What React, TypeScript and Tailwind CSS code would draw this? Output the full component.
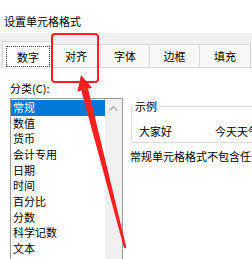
const categories = [
  "常规",
  "数值",
  "货币",
  "会计专用",
  "日期",
  "时间",
  "百分比",
  "分数",
  "科学记数",
  "文本",
];

const tabs = [
  { label: "对齐", width: "w-[49px]" },
  { label: "字体", width: "w-[49px]" },
  { label: "边框", width: "w-[50px]" },
  { label: "填充", width: "w-[51px]" },
];

export default function App() {
  return (
    <div className="relative h-[259px] w-[252px] overflow-hidden bg-white font-['Noto_Sans_CJK_SC',sans-serif] text-[11px] text-black">
      {/* Title bar */}
      <div className="h-[33px] px-[4px] pt-[14px] leading-[14px]">设置单元格格式</div>

      {/* Tab strip */}
      <div className="flex h-[35px] items-end bg-[#f0f0f0] pl-[2px]">
        <div className="h-[27px] w-[50px] shrink-0 border-x border-t border-[#d9d9d9] bg-white pl-[3px] pt-[4px]">
          <div className="flex h-[21px] w-[44px] items-center justify-center border border-dotted border-[#555] leading-[14px]">
            数字
          </div>
        </div>
        {tabs.map((tab) => (
          <div
            key={tab.label}
            className={`${tab.width} flex h-[24px] shrink-0 items-center justify-center border-y border-r border-[#d9d9d9] bg-[#f8f8f8] leading-[14px]`}
          >
            {tab.label}
          </div>
        ))}
        <div className="h-[24px] flex-1 border-b border-[#d9d9d9]" />
      </div>

      {/* Tab page */}
      <div className="flex pl-[10px] pt-[13px]">
        {/* Category list */}
        <div className="w-[113px] shrink-0">
          <div className="h-[14px] leading-[14px]">分类(C):</div>
          <div className="mt-[3px] flex h-[200px] border border-[#9a9a9a]">
            <ul className="w-[94px] pt-[1px]">
              {categories.map((item, i) => (
                <li
                  key={item}
                  className={
                    i === 0
                      ? "h-[15.67px] bg-[#0078d7] pl-[2px] leading-[15.67px] text-white"
                      : "h-[15.67px] pl-[2px] leading-[15.67px]"
                  }
                >
                  {item}
                </li>
              ))}
            </ul>
            <div className="w-[17px] bg-[#f0f0f0]">
              <div className="flex h-[17px] items-center justify-center pt-[1px]">
                <svg width="9" height="5" viewBox="0 0 9 5">
                  <path d="M0.5 4.5 L4.5 0.8 L8.5 4.5" fill="none" stroke="#a6a6a6" strokeWidth="1.2" />
                </svg>
              </div>
            </div>
          </div>
        </div>

        {/* Sample + description */}
        <div className="ml-[8px] min-w-0 whitespace-nowrap">
          <fieldset className="mt-[18px] w-[200px] border border-[#dcdcdc] pb-[4px]">
            <legend className="ml-[1px] px-[2px] leading-[14px]">示例</legend>
            <div className="mt-[11px] flex pl-[7px] leading-[14px]">
              <span className="w-[76px]">大家好</span>
              <span>今天天气很好</span>
            </div>
          </fieldset>
          <p className="-ml-[1px] mt-[6px] leading-[14px]">常规单元格格式不包含任何特定的数字格式。</p>
        </div>
      </div>

      {/* Annotation: red box + arrow */}
      <svg className="pointer-events-none absolute inset-0" width="252" height="259" viewBox="0 0 252 259">
        <rect x="52" y="34" width="46" height="48" rx="3" fill="none" stroke="#ff1f1f" strokeWidth="2" />
        <polygon points="81,75 92,87.7 77.4,91.4" fill="#ff1f1f" />
        <polygon points="88.1,88.7 81.3,90.4 123.8,247.3 126.2,246.7" fill="#ff1f1f" />
        <circle cx="125" cy="247" r="1.25" fill="#ff1f1f" />
      </svg>
    </div>
  );
}
